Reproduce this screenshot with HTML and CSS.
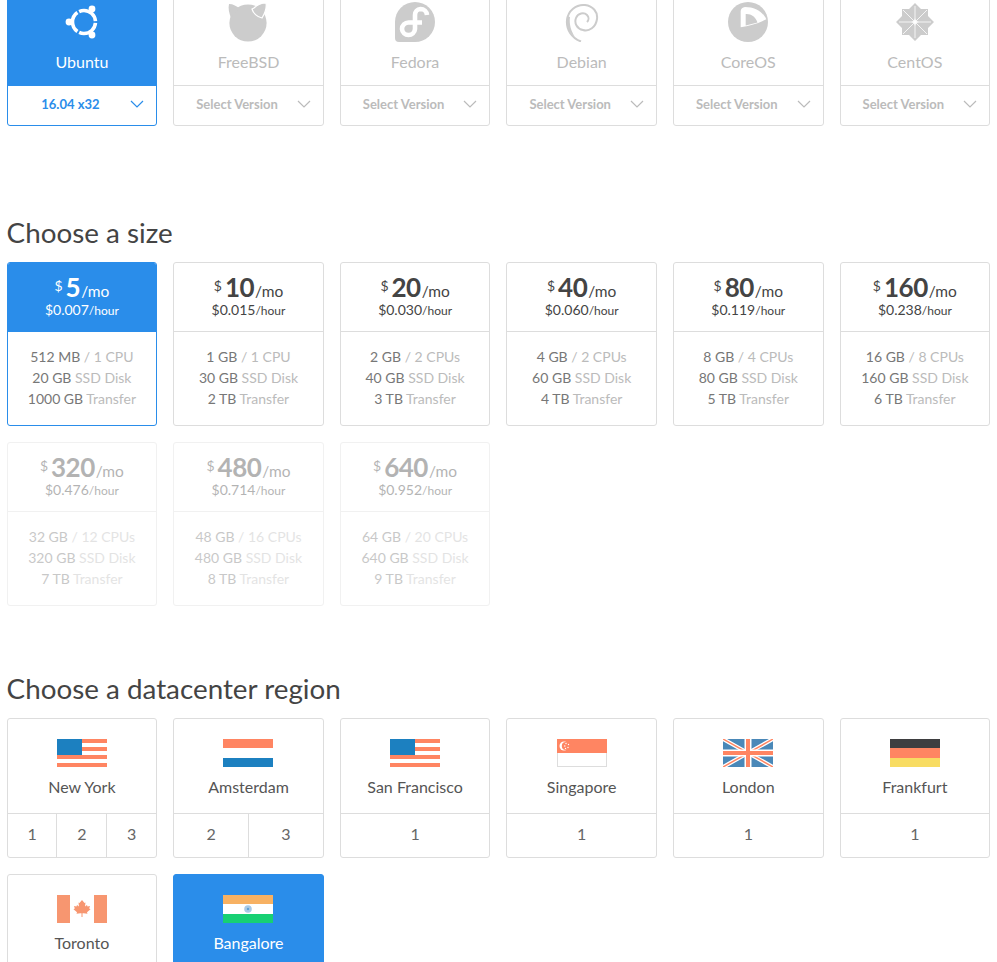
FILE: index.html
```html
<!DOCTYPE html>
<html lang="en">
<head>
    <meta charset="UTF-8">
    <meta name="viewport" content="width=device-width, initial-scale=1.0">
    <title>Create Droplet</title>
    <link rel="stylesheet" href="styles.css">
</head>
<body>

<div class="page">

    <!-- distributions -->
    <div class="grid os-grid">
        <div class="card os selected">
            <div class="os-head">
                <svg class="os-icon" viewBox="0 0 40 40">
                    <circle cx="22" cy="20" r="11.5" fill="none" stroke="#fff" stroke-width="3.6" pathLength="360" stroke-dasharray="110 10" stroke-dashoffset="-5"/>
                    <circle cx="30" cy="7" r="3.4" fill="#fff"/>
                    <circle cx="7" cy="20" r="3.4" fill="#fff"/>
                    <circle cx="30" cy="33" r="3.4" fill="#fff"/>
                </svg>
                <div class="os-name">Ubuntu</div>
            </div>
            <div class="os-select"><span>16.04 x32</span><svg class="chevron" viewBox="0 0 14 8"><path d="M1 1l6 6 6-6"/></svg></div>
        </div>
        <div class="card os">
            <div class="os-head">
                <svg class="os-icon" viewBox="0 0 40 40">
                    <circle cx="20" cy="21" r="18.6" fill="#ccc"/>
                    <path d="M1 2c4 0 8 2 11 5-4 2-7 5-9 9C1 11 0 6 1 2z" fill="#ccc"/>
                    <path d="M38 1c-4 0-9 2-12 5l-2 1c1 4 5 8 10 9 3-5 5-10 4-15z" fill="#ccc" stroke="#fff" stroke-width="1.2"/>
                </svg>
                <div class="os-name">FreeBSD</div>
            </div>
            <div class="os-select"><span>Select Version</span><svg class="chevron" viewBox="0 0 14 8"><path d="M1 1l6 6 6-6"/></svg></div>
        </div>
        <div class="card os">
            <div class="os-head">
                <svg class="os-icon" viewBox="0 0 40 40">
                    <path d="M20 0a20 20 0 1 1 0 40H4a4 4 0 0 1-4-4V20A20 20 0 0 1 20 0z" fill="#ccc"/>
                    <path d="M32 13a6.500 6.500 0 0 0-6.500-6A6 6 0 0 0 20 13v14a6.500 6.500 0 0 1-6.500 6A6.500 6.500 0 0 1 7 27a6.500 6.500 0 0 1 6.500-6.500H27" fill="none" stroke="#fff" stroke-width="4.6"/>
                </svg>
                <div class="os-name">Fedora</div>
            </div>
            <div class="os-select"><span>Select Version</span><svg class="chevron" viewBox="0 0 14 8"><path d="M1 1l6 6 6-6"/></svg></div>
        </div>
        <div class="card os">
            <div class="os-head">
                <svg class="os-icon" viewBox="0 0 40 40">
                    <path d="M19 39.500C10 36 4 28 5 18 6 9 14 2 23 3c8 1 13 7 12 14-1 8-8 13-14 11-6-1-9-7-7-12 2-5 8-6 11-3 2 2 2 5 0 7" fill="none" stroke="#ccc" stroke-width="2"/>
                    <path d="M5 14c-2 8 1 16 8 21-4-6-6-13-5-20z" fill="#ccc"/>
                </svg>
                <div class="os-name">Debian</div>
            </div>
            <div class="os-select"><span>Select Version</span><svg class="chevron" viewBox="0 0 14 8"><path d="M1 1l6 6 6-6"/></svg></div>
        </div>
        <div class="card os">
            <div class="os-head">
                <svg class="os-icon" viewBox="0 0 40 40">
                    <circle cx="20" cy="20" r="20" fill="#ccc"/>
                    <path d="M12.700 25.300V9Q13 5.500 17 5C27 5 35 10 38.300 17.300 30 21.500 21 24 12.700 25.300z" fill="#fff"/>
                    <path d="M17.700 12c5-.5 10 3 11.800 8.500L17.700 23.500z" fill="#ccc"/>
                </svg>
                <div class="os-name">CoreOS</div>
            </div>
            <div class="os-select"><span>Select Version</span><svg class="chevron" viewBox="0 0 14 8"><path d="M1 1l6 6 6-6"/></svg></div>
        </div>
        <div class="card os">
            <div class="os-head">
                <svg class="os-icon" viewBox="0 0 40 40">
                    <path d="M20 1l6 6h7v7l6 6-6 6v7h-7l-6 6-6-6H7v-7l-6-6 6-6V7h7z" fill="#ccc"/>
                    <path d="M20 4v32M4 20h32M8 8l24 24M32 8L8 32" fill="none" stroke="#fff" stroke-width=".8"/>
                    <path d="M20 16l1 3 3 1-3 1-1 3-1-3-3-1 3-1z" fill="#fff"/>
                </svg>
                <div class="os-name">CentOS</div>
            </div>
            <div class="os-select"><span>Select Version</span><svg class="chevron" viewBox="0 0 14 8"><path d="M1 1l6 6 6-6"/></svg></div>
        </div>
    </div>

    <h2>Choose a size</h2>
    <div class="grid">
        <div class="card size selected">
            <div class="size-head">
                <div class="price"><span class="dollar">$</span><b>5</b>/mo</div>
                <div class="hourly">$0.007<small>/hour</small></div>
            </div>
            <ul class="specs">
                <li><em>512 MB</em> / 1 CPU</li>
                <li><em>20 GB</em> SSD Disk</li>
                <li><em>1000 GB</em> Transfer</li>
            </ul>
        </div>
        <div class="card size">
            <div class="size-head">
                <div class="price"><span class="dollar">$</span><b>10</b>/mo</div>
                <div class="hourly">$0.015<small>/hour</small></div>
            </div>
            <ul class="specs">
                <li><em>1 GB</em> / 1 CPU</li>
                <li><em>30 GB</em> SSD Disk</li>
                <li><em>2 TB</em> Transfer</li>
            </ul>
        </div>
        <div class="card size">
            <div class="size-head">
                <div class="price"><span class="dollar">$</span><b>20</b>/mo</div>
                <div class="hourly">$0.030<small>/hour</small></div>
            </div>
            <ul class="specs">
                <li><em>2 GB</em> / 2 CPUs</li>
                <li><em>40 GB</em> SSD Disk</li>
                <li><em>3 TB</em> Transfer</li>
            </ul>
        </div>
        <div class="card size">
            <div class="size-head">
                <div class="price"><span class="dollar">$</span><b>40</b>/mo</div>
                <div class="hourly">$0.060<small>/hour</small></div>
            </div>
            <ul class="specs">
                <li><em>4 GB</em> / 2 CPUs</li>
                <li><em>60 GB</em> SSD Disk</li>
                <li><em>4 TB</em> Transfer</li>
            </ul>
        </div>
        <div class="card size">
            <div class="size-head">
                <div class="price"><span class="dollar">$</span><b>80</b>/mo</div>
                <div class="hourly">$0.119<small>/hour</small></div>
            </div>
            <ul class="specs">
                <li><em>8 GB</em> / 4 CPUs</li>
                <li><em>80 GB</em> SSD Disk</li>
                <li><em>5 TB</em> Transfer</li>
            </ul>
        </div>
        <div class="card size">
            <div class="size-head">
                <div class="price"><span class="dollar">$</span><b>160</b>/mo</div>
                <div class="hourly">$0.238<small>/hour</small></div>
            </div>
            <ul class="specs">
                <li><em>16 GB</em> / 8 CPUs</li>
                <li><em>160 GB</em> SSD Disk</li>
                <li><em>6 TB</em> Transfer</li>
            </ul>
        </div>
        <div class="card size disabled">
            <div class="size-head">
                <div class="price"><span class="dollar">$</span><b>320</b>/mo</div>
                <div class="hourly">$0.476<small>/hour</small></div>
            </div>
            <ul class="specs">
                <li><em>32 GB</em> / 12 CPUs</li>
                <li><em>320 GB</em> SSD Disk</li>
                <li><em>7 TB</em> Transfer</li>
            </ul>
        </div>
        <div class="card size disabled">
            <div class="size-head">
                <div class="price"><span class="dollar">$</span><b>480</b>/mo</div>
                <div class="hourly">$0.714<small>/hour</small></div>
            </div>
            <ul class="specs">
                <li><em>48 GB</em> / 16 CPUs</li>
                <li><em>480 GB</em> SSD Disk</li>
                <li><em>8 TB</em> Transfer</li>
            </ul>
        </div>
        <div class="card size disabled">
            <div class="size-head">
                <div class="price"><span class="dollar">$</span><b>640</b>/mo</div>
                <div class="hourly">$0.952<small>/hour</small></div>
            </div>
            <ul class="specs">
                <li><em>64 GB</em> / 20 CPUs</li>
                <li><em>640 GB</em> SSD Disk</li>
                <li><em>9 TB</em> Transfer</li>
            </ul>
        </div>
    </div>

    <h2 class="region-title">Choose a datacenter region</h2>
    <div class="grid">
        <div class="card region">
            <div class="region-head">
                <svg class="flag" viewBox="0 0 50 28">
                    <path d="M0 0h50v4H0zM0 8h50v4H0zM0 16h50v4H0zM0 24h50v4H0z" fill="#ff8562"/>
                    <rect width="25" height="16" fill="#1c80c0"/>
                </svg>
                <div class="region-name">New York</div>
            </div>
            <div class="slots"><span>1</span><span>2</span><span>3</span></div>
        </div>
        <div class="card region">
            <div class="region-head">
                <svg class="flag" viewBox="0 0 50 28">
                    <rect width="50" height="9" fill="#ff8562"/>
                    <rect y="19" width="50" height="9" fill="#1c80c0"/>
                </svg>
                <div class="region-name">Amsterdam</div>
            </div>
            <div class="slots"><span>2</span><span>3</span></div>
        </div>
        <div class="card region">
            <div class="region-head">
                <svg class="flag" viewBox="0 0 50 28">
                    <path d="M0 0h50v4H0zM0 8h50v4H0zM0 16h50v4H0zM0 24h50v4H0z" fill="#ff8562"/>
                    <rect width="25" height="16" fill="#1c80c0"/>
                </svg>
                <div class="region-name">San Francisco</div>
            </div>
            <div class="slots"><span>1</span></div>
        </div>
        <div class="card region">
            <div class="region-head">
                <svg class="flag" viewBox="0 0 50 28">
                    <rect x=".5" y=".5" width="49" height="27" fill="#fff" stroke="#ddd"/>
                    <rect width="50" height="14" fill="#ff8562"/>
                    <circle cx="7" cy="7" r="4.500" fill="#fff"/>
                    <circle cx="8.800" cy="7" r="4" fill="#ff8562"/>
                    <g fill="#fff">
                        <circle cx="9" cy="4.500" r=".7"/>
                        <circle cx="11.500" cy="5.500" r=".7"/>
                        <circle cx="11" cy="8.500" r=".7"/>
                        <circle cx="8.500" cy="9.500" r=".7"/>
                        <circle cx="7.800" cy="7" r=".7"/>
                    </g>
                </svg>
                <div class="region-name">Singapore</div>
            </div>
            <div class="slots"><span>1</span></div>
        </div>
        <div class="card region">
            <div class="region-head">
                <svg class="flag" viewBox="0 0 50 28">
                    <rect width="50" height="28" fill="#4a88b8"/>
                    <path d="M0 0l50 28M50 0L0 28" stroke="#fff" stroke-width="4"/>
                    <path d="M0 0l50 28M50 0L0 28" stroke="#ff8562" stroke-width="1.500"/>
                    <path d="M25 0v28M0 14h50" stroke="#fff" stroke-width="7"/>
                    <path d="M25 0v28M0 14h50" stroke="#ff8562" stroke-width="4"/>
                </svg>
                <div class="region-name">London</div>
            </div>
            <div class="slots"><span>1</span></div>
        </div>
        <div class="card region">
            <div class="region-head">
                <svg class="flag" viewBox="0 0 50 28">
                    <rect width="50" height="9" fill="#3e3e40"/>
                    <rect y="9" width="50" height="10" fill="#ff8562"/>
                    <rect y="19" width="50" height="9" fill="#f8dc62"/>
                </svg>
                <div class="region-name">Frankfurt</div>
            </div>
            <div class="slots"><span>1</span></div>
        </div>
        <div class="card region">
            <div class="region-head">
                <svg class="flag" viewBox="0 0 50 28">
                    <rect width="13" height="28" fill="#f79670"/>
                    <rect x="37" width="13" height="28" fill="#f79670"/>
                    <path d="M25 5l2.500 3 1-.5-.5 4 2-1.500.5 1.500 2.500-.5-.8 2.500 1.300.8-3.500 3 .5 1.500-4-.5h-1V22h-1v-3.700h-1l-4 .5.500-1.500-3.500-3 1.300-.8-.8-2.500 2.500.5.500-1.500 2 1.500-.5-4 1 .5z" fill="#f79670"/>
                </svg>
                <div class="region-name">Toronto</div>
            </div>
        </div>
        <div class="card region selected">
            <div class="region-head">
                <svg class="flag" viewBox="0 0 50 28">
                    <rect width="50" height="9" fill="#f7b163"/>
                    <rect y="9" width="50" height="10" fill="#fff"/>
                    <rect y="19" width="50" height="9" fill="#17d073"/>
                    <circle cx="25" cy="14" r="3.800" fill="#a9c9e6"/>
                    <circle cx="25" cy="14" r="1.200" fill="#5f9fd6"/>
                </svg>
                <div class="region-name">Bangalore</div>
            </div>
        </div>
    </div>

</div>

</body>
</html>
```

FILE: styles.css
```css
html, body {
    height: 100%;
}
body {
    font-family: Lato, "Open Sans", sans-serif;
    margin: 0;
    padding: 0;
    background-color: #fff;
    color: #444;
    overflow: hidden;
}
.page {
    padding: 0 0 0 6.6px;
}
.grid {
    display: grid;
    grid-template-columns: repeat(6, 150.6px);
    gap: 16px;
}
.os-grid {
    margin-top: -14px;
}
h2 {
    font-size: 27.8px;
    font-weight: 400;
    line-height: 30px;
    color: #444;
    margin: 92px 0 14px 0;
}
.region-title {
    margin-top: 68px;
}
.card {
    box-sizing: border-box;
    background: #fff;
    border: 1px solid #ddd;
    border-radius: 3px;
    text-align: center;
    overflow: hidden;
}

/* distributions */
.os {
    height: 140px;
}
.os-head {
    height: 99px;
    padding-top: 15px;
    box-sizing: border-box;
    border-bottom: 1px solid #ddd;
}
.os-icon {
    display: block;
    width: 40px;
    height: 40px;
    margin: 0 auto;
}
.os-name {
    font-size: 16px;
    line-height: 20px;
    margin-top: 10px;
    color: #bbb;
}
.os-select {
    display: flex;
    align-items: center;
    box-sizing: border-box;
    height: 39px;
    padding: 0 12px 3px 8px;
    font-size: 13px;
    font-weight: 700;
    color: #bbb;
}
.os-select span {
    flex: 1;
    padding-right: 5px;
}
.chevron {
    width: 14px;
    height: 8px;
    fill: none;
    stroke: #bbb;
    stroke-width: 1.2;
}
.os.selected {
    border-color: #2a8dea;
}
.os.selected .os-head {
    background: #2a8dea;
    border-bottom-color: #2a8dea;
}
.os.selected .os-name {
    color: #fff;
}
.os.selected .os-select {
    color: #2a8dea;
}
.os.selected .chevron {
    stroke: #2a8dea;
}

/* sizes */
.size {
    height: 164px;
}
.size-head {
    height: 69px;
    box-sizing: border-box;
    padding-top: 10px;
    border-bottom: 1px solid #ddd;
}
.price {
    height: 29px;
    font-size: 15.5px;
    line-height: 29px;
}
.price b {
    font-size: 26px;
    font-weight: 700;
    letter-spacing: -.5px;
    margin-right: 1px;
}
.dollar {
    font-size: 14px;
    position: relative;
    top: -6px;
    margin-right: 3px;
}
.hourly {
    font-size: 14px;
    line-height: 16px;
}
.hourly small {
    font-size: 12px;
}
.specs {
    list-style: none;
    margin: 0;
    padding: 14px 0 0 0;
    font-size: 14px;
    line-height: 21px;
    color: #bbb;
}
.specs em {
    font-style: normal;
    color: #777;
}
.size.selected {
    border-color: #2a8dea;
}
.size.selected .size-head {
    background: #2a8dea;
    border-bottom-color: #2a8dea;
    color: #fff;
}
.size.disabled {
    opacity: .4;
}

/* regions */
.region {
    height: 140px;
}
.region-head {
    height: 95px;
    box-sizing: border-box;
    padding-top: 20px;
    border-bottom: 1px solid #ddd;
}
.flag {
    display: block;
    width: 50px;
    height: 28px;
    margin: 0 auto;
}
.region-name {
    font-size: 16px;
    line-height: 20px;
    margin-top: 10px;
    color: #555;
}
.slots {
    display: flex;
    height: 43px;
}
.slots span {
    flex: 1;
    line-height: 39px;
    font-size: 16px;
    color: #666;
    border-left: 1px solid #ddd;
}
.slots span:first-child {
    border-left: none;
}
.region.selected {
    background: #2a8dea;
    border-color: #2a8dea;
}
.region.selected .region-head {
    border-bottom-color: #2a8dea;
}
.region.selected .region-name {
    color: #fff;
}
```
